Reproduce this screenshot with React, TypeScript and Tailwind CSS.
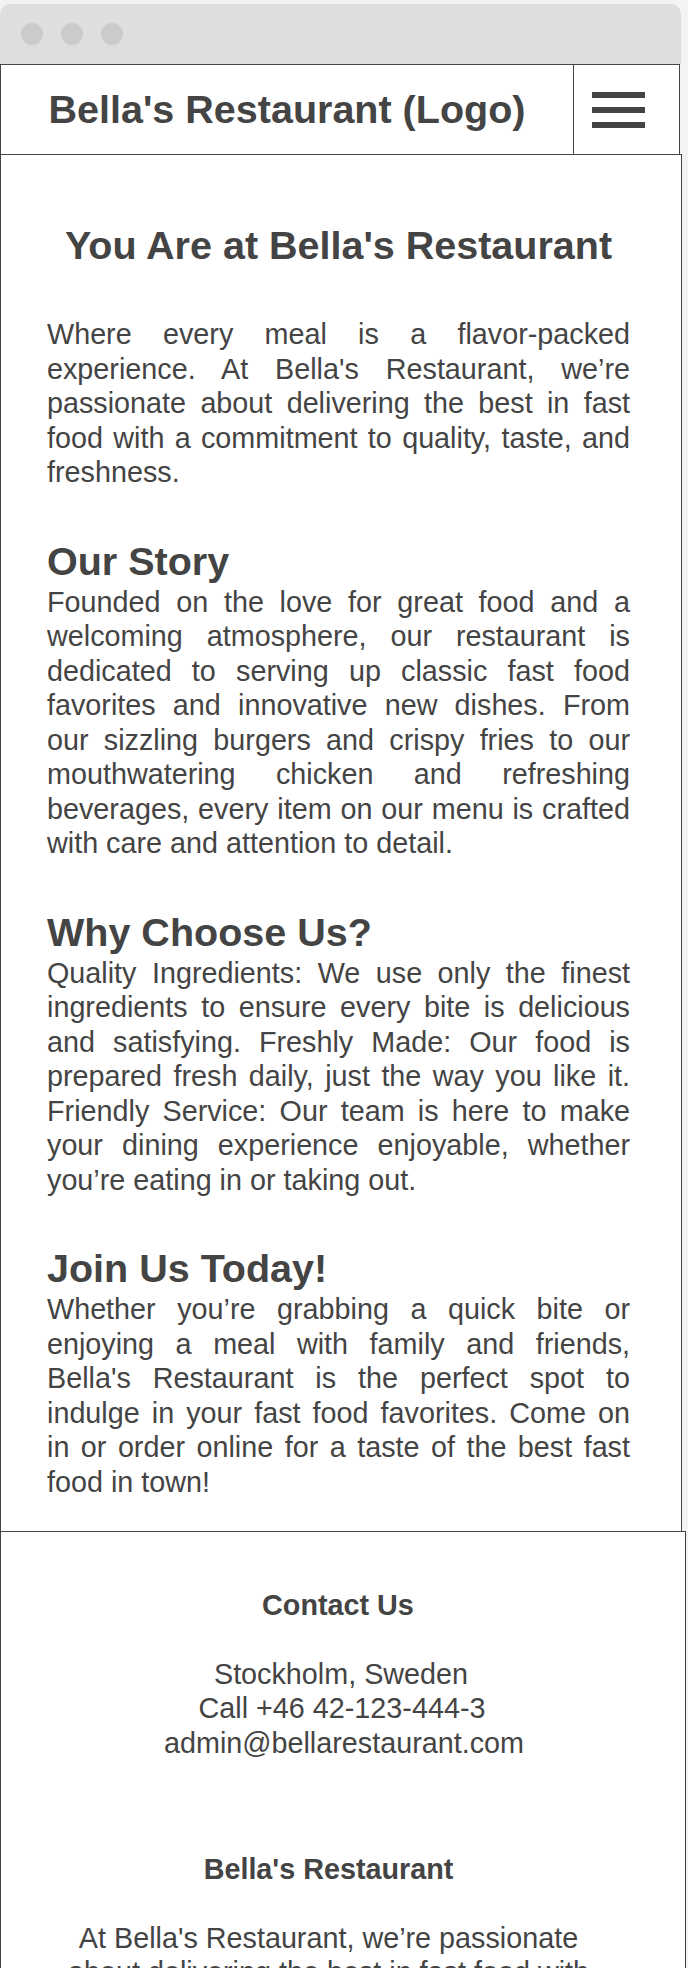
import React from 'react';

const sections = [
  {
    title: 'Our Story',
    body: 'Founded on the love for great food and a welcoming atmosphere, our restaurant is dedicated to serving up classic fast food favorites and innovative new dishes. From our sizzling burgers and crispy fries to our mouthwatering chicken and refreshing beverages, every item on our menu is crafted with care and attention to detail.',
  },
  {
    title: 'Why Choose Us?',
    body: 'Quality Ingredients: We use only the finest ingredients to ensure every bite is delicious and satisfying. Freshly Made: Our food is prepared fresh daily, just the way you like it. Friendly Service: Our team is here to make your dining experience enjoyable, whether you’re eating in or taking out.',
  },
  {
    title: 'Join Us Today!',
    body: 'Whether you’re grabbing a quick bite or enjoying a meal with family and friends, Bella\'s Restaurant is the perfect spot to indulge in your fast food favorites. Come on in or order online for a taste of the best fast food in town!',
  },
];

const App: React.FC = () => {
  return (
    <div className="min-h-screen bg-[#f3f3f3] pt-1 text-[#444] font-['Liberation_Sans',Arial,sans-serif]">
      {/* Window chrome */}
      <div className="w-[681px] h-[60px] rounded-t-[10px] bg-[#dedede] flex items-center gap-[18px] pl-[21px]">
        <span className="w-[22px] h-[22px] rounded-full bg-[#cbcbcb]" />
        <span className="w-[22px] h-[22px] rounded-full bg-[#cbcbcb]" />
        <span className="w-[22px] h-[22px] rounded-full bg-[#cbcbcb]" />
      </div>

      {/* Header */}
      <header className="w-[680px] h-[90px] flex border border-b-0 border-[#444] bg-white">
        <div className="flex-1 flex items-center justify-center border-r border-[#444]">
          <span className="text-[39.5px] font-bold leading-none">Bella's Restaurant (Logo)</span>
        </div>
        <div className="w-[105px] flex flex-col justify-center gap-[9px] pl-[18px]">
          <span className="w-[53px] h-[6px] bg-[#444]" />
          <span className="w-[53px] h-[6px] bg-[#444]" />
          <span className="w-[53px] h-[6px] bg-[#444]" />
        </div>
      </header>

      {/* Main content */}
      <main className="w-[682px] border border-b-0 border-[#444] bg-white pl-[46px] pr-[51px] pt-[67px] pb-[32px]">
        <h1 className="text-[39.5px] leading-[47px] font-bold text-center">You Are at Bella's Restaurant</h1>
        <p className="mt-[48px] text-[28.75px] leading-[34.5px] text-justify">
          Where every meal is a flavor-packed experience. At Bella's Restaurant, we’re passionate about delivering the best in fast food with a commitment to quality, taste, and freshness.
        </p>
        {sections.map((s) => (
          <section key={s.title} className="mt-[47px]">
            <h2 className="text-[39.5px] leading-[48px] font-bold">{s.title}</h2>
            <p className="text-[28.75px] leading-[34.5px] text-justify">{s.body}</p>
          </section>
        ))}
      </main>

      {/* Footer */}
      <footer className="w-[686px] border border-b-0 border-[#444] bg-white pt-[56px] pb-[60px] text-[28.75px] leading-[34.5px]">
        <div className="text-center">
          <h3 className="font-bold pr-[10px]">Contact Us</h3>
          <div className="mt-[34px]">
            <p className="pr-[4px]">Stockholm, Sweden</p>
            <p className="pr-[2px]">Call +46 42-123-444-3</p>
            <p className="pl-[2px]">admin@bellarestaurant.com</p>
          </div>
        </div>
        <div className="mt-[92px] ml-[57px] w-[541px] text-center">
          <h3 className="font-bold">Bella's Restaurant</h3>
          <p className="mt-[34px]">
            At Bella's Restaurant, we’re passionate about delivering the best in fast food with a commitment to quality, taste, and freshness.
          </p>
        </div>
      </footer>
    </div>
  );
};

export default App;
